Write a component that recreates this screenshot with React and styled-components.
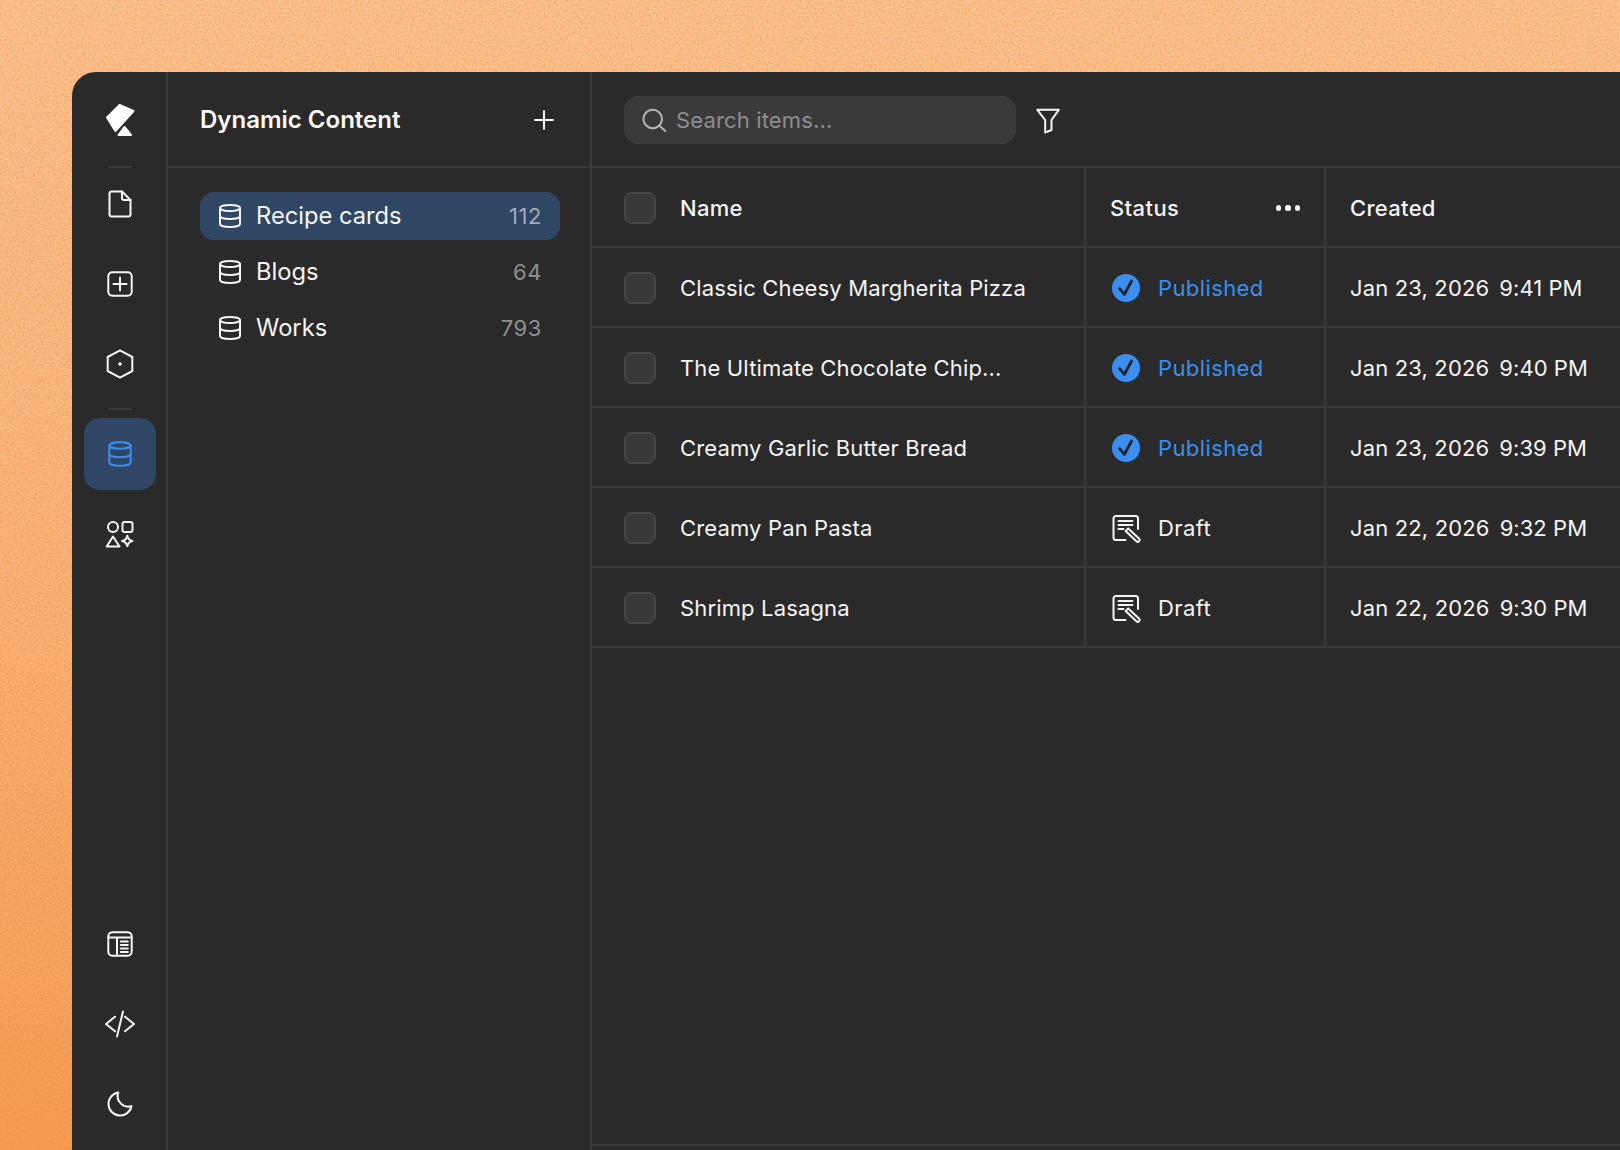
import React from 'react';
import styled, { createGlobalStyle } from 'styled-components';

const Global = createGlobalStyle`
  html, body { margin: 0; padding: 0; height: 100%; overflow: hidden; }
  #root { height: 100%; }
  * { box-sizing: border-box; }
`;

const LINE = '#3a3a3a';
const BG = '#2a2a2a';
const BLUE = '#3b8ef0';

const Page = styled.div`
  position: relative;
  width: 1620px;
  height: 1150px;
  padding: 72px 0 0 72px;
  overflow: hidden;
  background: linear-gradient(180deg, #fdc494 0%, #fbb57f 45%, #f59b52 100%);
  font-family: Inter, "Noto Sans", sans-serif;
  color: #f5f5f5;
`;
const Grain = styled.svg`
  position: absolute;
  inset: 0;
  width: 100%;
  height: 100%;
`;
const Window = styled.div`
  position: relative;
  display: flex;
  height: 100%;
  background: ${BG};
  border-top-left-radius: 24px;
  overflow: hidden;
`;
const Rail = styled.nav`
  display: flex;
  flex-direction: column;
  align-items: center;
  flex: 0 0 96px;
  width: 96px;
  padding: 12px 10px 10px 12px;
  border-right: 2px solid ${LINE};
`;
const RailBtn = styled.div`
  display: flex;
  align-items: center;
  justify-content: center;
  width: 72px;
  height: 72px;
  flex: none;
  margin-bottom: ${p => (p.$flush ? 0 : 8)}px;
  border-radius: 16px;
  background: ${p => (p.$active ? '#2f4764' : 'transparent')};
  color: ${p => (p.$active ? BLUE : '#f5f5f5')};
`;
const RailSep = styled.div`
  width: 24px;
  height: 2px;
  flex: none;
  margin: ${p => p.$m};
  background: ${LINE};
`;
const Spacer = styled.div`
  flex: 1;
`;
const Panel = styled.aside`
  flex: 0 0 424px;
  display: flex;
  flex-direction: column;
  border-right: 2px solid ${LINE};
`;
const PanelHead = styled.header`
  display: flex;
  align-items: center;
  justify-content: space-between;
  height: 96px;
  flex: none;
  padding: 2px 36px 0 32px;
  border-bottom: 2px solid ${LINE};
`;
const Title = styled.h1`
  margin: 0;
  font-size: 24px;
  line-height: 32px;
  font-weight: 600;
  color: #fafafa;
`;
const List = styled.ul`
  list-style: none;
  margin: 0;
  padding: 24px 30px 0 32px;
  display: flex;
  flex-direction: column;
  gap: 8px;
`;
const Item = styled.li`
  display: flex;
  align-items: center;
  height: 48px;
  padding: 0 18px;
  gap: 14px;
  border-radius: 14px;
  font-size: 23.7px;
  background: ${p => (p.$active ? '#2f4764' : 'transparent')};
`;
const ItemName = styled.span`
  flex: 1;
  color: #f5f5f5;
  margin-top: -1px;
`;
const Count = styled.span`
  color: ${p => (p.$active ? '#a3abb5' : '#8f8f8f')};
  font-size: 22px;
  letter-spacing: 0.6px;
`;
const Main = styled.main`
  flex: 1;
  min-width: 0;
  display: flex;
  flex-direction: column;
`;
const Toolbar = styled.div`
  display: flex;
  align-items: center;
  height: 96px;
  flex: none;
  padding: 2px 0 0 32px;
  gap: 14px;
  border-bottom: 2px solid ${LINE};
`;
const Search = styled.div`
  display: flex;
  align-items: center;
  width: 392px;
  height: 48px;
  padding: 0 0 0 16px;
  gap: 8px;
  border-radius: 14px;
  background: #3a3a3a;
`;
const Placeholder = styled.span`
  font-size: 22px;
  color: #8e8e8e;
  letter-spacing: 0.15px;
`;
const Table = styled.div`
  flex: 1;
  display: grid;
  grid-template-columns: 494px 240px 1fr;
  grid-auto-rows: 80px;
  align-content: start;
`;
const Cell = styled.div`
  display: flex;
  align-items: center;
  min-width: 0;
  padding: 2px 0 0 24px;
  border-bottom: 2px solid ${LINE};
  border-right: ${p => (p.$last ? 'none' : `2px solid ${LINE}`)};
  font-size: 22px;
  font-weight: ${p => (p.$head ? 500 : 400)};
  letter-spacing: ${p => p.$track || '0.15px'};
  white-space: nowrap;
  color: ${p => p.$color || '#f5f5f5'};
`;
const NameCell = styled(Cell)`
  padding-left: 32px;
  gap: 24px;
`;
const StatusHead = styled(Cell)`
  justify-content: space-between;
  padding-right: 24px;
`;
const Checkbox = styled.span`
  width: 32px;
  height: 32px;
  flex: none;
  border-radius: 8px;
  background: #383838;
  border: 2px solid #444444;
`;
const Dots = styled.span`
  display: flex;
  gap: 4px;
  & > i {
    display: block;
    width: 5.5px;
    height: 5.5px;
    border-radius: 50%;
    background: #f5f5f5;
  }
`;
const Slot = styled.span`
  display: flex;
  margin-right: 16px;
  flex: none;
`;
const Time = styled.span`
  margin-left: 10px;
  letter-spacing: 0.05px;
`;
const Footer = styled.div`
  height: 6px;
  flex: none;
  border-top: 2px solid ${LINE};
`;

const Ico = ({ size = 36, sw = 2, children }) => (
  <svg width={size} height={size} viewBox={`0 0 ${size} ${size}`} fill="none" stroke="currentColor" strokeWidth={sw} strokeLinecap="round" strokeLinejoin="round">
    {children}
  </svg>
);

const Logo = () => (
  <svg width="36" height="36" viewBox="0 0 36 36" fill="#fff" stroke="#fff" strokeWidth="2" strokeLinejoin="round">
    <path d="M17.6 3 L31.5 9 L13.4 29 L5 15.5 Z" />
    <path d="M22.4 25 L29 33 L16.5 33 Z" />
  </svg>
);
const Doc = () => (
  <Ico>
    <path d="M9.5 5.5H20L28.5 14V28.5a2 2 0 0 1-2 2H9.5a2 2 0 0 1-2-2V7.5a2 2 0 0 1 2-2Z" />
    <path d="M20 5.5V12a2 2 0 0 0 2 2h6.5" />
  </Ico>
);
const PlusBox = () => (
  <Ico>
    <rect x="6.3" y="6.3" width="23.4" height="23.4" rx="4" />
    <path d="M18 11.5v13M11.5 18h13" />
  </Ico>
);
const Hex = () => (
  <Ico>
    <path d="M18 4.3 30.3 11v14L18 31.7 5.7 25V11Z" />
    <circle cx="18" cy="18" r="1.8" fill="currentColor" stroke="none" />
  </Ico>
);
const Database = () => (
  <Ico>
    <ellipse cx="18" cy="9.5" rx="10.7" ry="3.2" />
    <path d="M7.3 9.5V26.5c0 1.8 4.8 3.2 10.7 3.2s10.7-1.4 10.7-3.2V9.5" />
    <path d="M7.3 18c0 1.8 4.8 3.2 10.7 3.2s10.7-1.4 10.7-3.2" />
  </Ico>
);
const SmallDb = () => (
  <svg width="24" height="26" viewBox="0 0 24 26" fill="none" stroke="currentColor" strokeWidth="2" strokeLinecap="round" strokeLinejoin="round">
    <ellipse cx="12" cy="5" rx="10" ry="3" />
    <path d="M2 5V21c0 1.7 4.5 3 10 3s10-1.3 10-3V5" />
    <path d="M2 13c0 1.7 4.5 3 10 3s10-1.3 10-3" />
  </svg>
);
const Shapes = () => (
  <Ico>
    <circle cx="11" cy="11" r="5" />
    <rect x="20.5" y="6" width="10" height="10" rx="2" />
    <path d="M11 20.5 17.5 30.5H4.7Z" />
    <path d="M25.3 19.8c.6 3 2 4.6 5.2 5.2-3.2.6-4.6 2.2-5.2 5.2-.6-3-2-4.6-5.2-5.2 3.2-.6 4.6-2.2 5.2-5.2Z" />
  </Ico>
);
const TableIco = () => (
  <Ico>
    <rect x="6.3" y="6.3" width="23.4" height="23.4" rx="4" />
    <path d="M6.3 11.5h23.4M15 11.5v18M18.8 15.5h7M18.8 19h7M18.8 22.5h7M18.8 26h7" />
  </Ico>
);
const Code = () => (
  <Ico>
    <path d="M13 10.7 4 18l9 7.3M23 10.7 32 18l-9 7.3M21 5.5 15 30.5" />
  </Ico>
);
const Moon = () => (
  <Ico>
    <path d="M16.3 6.5A11.6 11.6 0 1 0 29.5 20 10.5 10.5 0 0 1 16.3 6.5Z" />
  </Ico>
);
const PlusIco = () => (
  <svg width="20" height="20" viewBox="0 0 20 20" fill="none" stroke="#f5f5f5" strokeWidth="2" strokeLinecap="round">
    <path d="M10 1v18M1 10h18" />
  </svg>
);
const SearchIco = () => (
  <svg width="28" height="28" viewBox="0 0 28 28" fill="none" stroke="#b4b4b4" strokeWidth="2" strokeLinecap="round">
    <circle cx="12.7" cy="13" r="9.3" />
    <path d="M19.7 20 25.3 25" />
  </svg>
);
const Funnel = () => (
  <svg width="36" height="36" viewBox="0 0 36 36" fill="none" stroke="#f5f5f5" strokeWidth="2" strokeLinejoin="round">
    <path d="M7.3 7.8H28.8L21.5 18V28L15.2 30.5V18Z" />
  </svg>
);
const Check = () => (
  <svg width="32" height="32" viewBox="0 0 32 32" fill="none">
    <circle cx="16" cy="16" r="14" fill={BLUE} />
    <path d="M9.6 16.5 14.3 22.5 21.5 9" stroke="#20242a" strokeWidth="2.8" strokeLinecap="round" strokeLinejoin="round" />
  </svg>
);
const DraftIco = () => (
  <svg width="32" height="32" viewBox="0 0 32 32" fill="none" stroke="#f5f5f5" strokeWidth="2" strokeLinecap="round" strokeLinejoin="round">
    <g transform="translate(-2 0)">
      <path d="M17.5 28H8a2.5 2.5 0 0 1-2.5-2.5V6.5A2.5 2.5 0 0 1 8 4h19.5A2.5 2.5 0 0 1 30 6.5V17" />
      <path d="M10.5 9h14M10.5 13h14M10.5 17h5" />
      <path d="M20.2 16.4 31 26.6a1.8 1.8 0 0 1-2.6 2.6L17.6 19Z" />
    </g>
  </svg>
);

const rows = [
  ['Classic Cheesy Margherita Pizza', true, 'Jan 23, 2026', '9:41 PM'],
  ['The Ultimate Chocolate Chip...', true, 'Jan 23, 2026', '9:40 PM'],
  ['Creamy Garlic Butter Bread', true, 'Jan 23, 2026', '9:39 PM'],
  ['Creamy Pan Pasta', false, 'Jan 22, 2026', '9:32 PM'],
  ['Shrimp Lasagna', false, 'Jan 22, 2026', '9:30 PM'],
];
const collections = [
  ['Recipe cards', '112', true],
  ['Blogs', '64', false],
  ['Works', '793', false],
];

export default function App() {
  return (
    <Page>
      <Global />
      <Grain aria-hidden="true">
        <filter id="grain" x="0" y="0" width="100%" height="100%" colorInterpolationFilters="sRGB">
          <feTurbulence type="fractalNoise" baseFrequency="0.48" numOctaves="2" seed="7" />
          <feColorMatrix type="matrix" values="0 0 0 0 0.93  0 0 0 0 0.58  0 0 0 0 0.28  2.8 0 0 0 -1.1" />
        </filter>
        <rect width="100%" height="100%" filter="url(#grain)" opacity="0.5" />
      </Grain>
      <Window>
        <Rail>
          <RailBtn $flush><Logo /></RailBtn>
          <RailSep $m="10px 0 0" />
          <RailBtn><Doc /></RailBtn>
          <RailBtn><PlusBox /></RailBtn>
          <RailBtn $flush><Hex /></RailBtn>
          <RailSep $m="8px 0" />
          <RailBtn $active><Database /></RailBtn>
          <RailBtn><Shapes /></RailBtn>
          <Spacer />
          <RailBtn><TableIco /></RailBtn>
          <RailBtn><Code /></RailBtn>
          <RailBtn $flush><Moon /></RailBtn>
        </Rail>
        <Panel>
          <PanelHead>
            <Title>Dynamic Content</Title>
            <PlusIco />
          </PanelHead>
          <List>
            {collections.map(([name, count, active]) => (
              <Item key={name} $active={active}>
                <SmallDb />
                <ItemName>{name}</ItemName>
                <Count $active={active}>{count}</Count>
              </Item>
            ))}
          </List>
        </Panel>
        <Main>
          <Toolbar>
            <Search>
              <SearchIco />
              <Placeholder>Search items...</Placeholder>
            </Search>
            <Funnel />
          </Toolbar>
          <Table>
            <NameCell $head $track="0.3px"><Checkbox />Name</NameCell>
            <StatusHead $head $track="0.4px">Status<Dots><i /><i /><i /></Dots></StatusHead>
            <Cell $head $last $track="0.3px">Created</Cell>
            {rows.map(([name, published, date, time]) => (
              <React.Fragment key={name}>
                <NameCell><Checkbox />{name}</NameCell>
                <Cell $color={published ? BLUE : undefined} $track="0.4px">
                  <Slot>{published ? <Check /> : <DraftIco />}</Slot>
                  {published ? 'Published' : 'Draft'}
                </Cell>
                <Cell $last>{date}<Time>{time}</Time></Cell>
              </React.Fragment>
            ))}
          </Table>
          <Footer />
        </Main>
      </Window>
    </Page>
  );
}
